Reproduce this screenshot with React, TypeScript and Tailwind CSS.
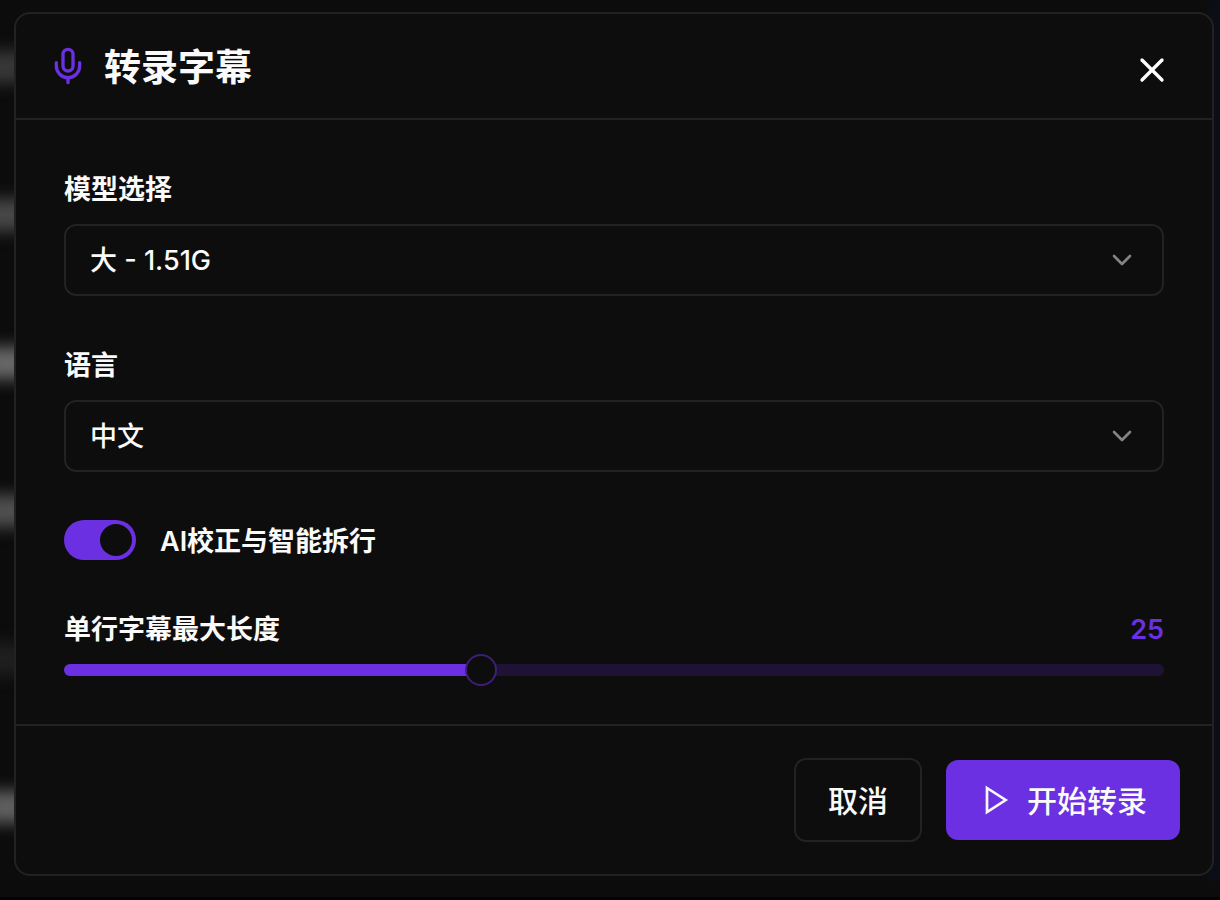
import { useState, type ReactNode } from "react";
import { ChevronDown, Mic, X } from "lucide-react";

const MODELS = [
  { value: "large", label: "大 - 1.51G" },
  { value: "medium", label: "中 - 769M" },
  { value: "small", label: "小 - 244M" },
];

const LANGUAGES = [
  { value: "zh", label: "中文" },
  { value: "en", label: "English" },
  { value: "ja", label: "日本語" },
];

const MIN_LENGTH = 10;
const MAX_LENGTH = 50;

interface SelectFieldProps {
  id: string;
  label: string;
  value: string;
  options: { value: string; label: string }[];
  onChange: (value: string) => void;
}

function SelectField({ id, label, value, options, onChange }: SelectFieldProps) {
  return (
    <div className="flex flex-col gap-4">
      <label htmlFor={id} className="pt-1 text-[27px] leading-9 font-semibold">
        {label}
      </label>
      <div className="grid items-center">
        <select
          id={id}
          value={value}
          onChange={(e) => onChange(e.target.value)}
          className="col-start-1 row-start-1 h-18 w-full appearance-none rounded-xl border-2 border-[#222222] bg-[#0d0d0d] px-6 pt-0.5 text-[27px] font-medium text-[#fafafa] outline-none"
        >
          {options.map((option) => (
            <option key={option.value} value={option.value}>
              {option.label}
            </option>
          ))}
        </select>
        <ChevronDown className="pointer-events-none col-start-1 row-start-1 mr-[26px] size-8 justify-self-end text-[#848484]" />
      </div>
    </div>
  );
}

function PlayIcon() {
  return (
    <svg
      viewBox="0 0 24 24"
      className="size-8"
      fill="none"
      stroke="currentColor"
      strokeWidth="2"
      strokeLinecap="round"
      strokeLinejoin="miter"
      aria-hidden="true"
    >
      <polygon points="6 3 20 12 6 21 6 3" />
    </svg>
  );
}

function Backdrop({ children }: { children: ReactNode }) {
  return (
    <div className="relative min-h-screen overflow-hidden border-b-3 border-[#040304] bg-[#0c0c0c]">
      {/* blurred page content behind the dialog */}
      <div aria-hidden="true" className="absolute inset-0 flex justify-between">
        <div className="-ml-4 flex w-16 flex-col gap-[116px] pt-[51px]">
          <div className="h-8 bg-[#383838] blur-[8px]" />
          <div className="h-8 bg-[#484848] blur-[8px]" />
          <div className="h-8 bg-[#686868] blur-[8px]" />
          <div className="h-8 bg-[#505050] blur-[8px]" />
          <div className="h-8 bg-[#1f1f1f] blur-[8px]" />
          <div className="h-8 bg-[#606060] blur-[8px]" />
        </div>
        <div className="mb-4 w-3 bg-[#0b0e17] blur-[1px]" />
      </div>
      <div className="relative pt-3 pr-1.5 pb-5 pl-3.5">{children}</div>
    </div>
  );
}

export default function App() {
  const [model, setModel] = useState("large");
  const [language, setLanguage] = useState("zh");
  const [aiEnabled, setAiEnabled] = useState(true);
  const [maxLength, setMaxLength] = useState(25);

  const percent = ((maxLength - MIN_LENGTH) / (MAX_LENGTH - MIN_LENGTH)) * 100;

  return (
    <Backdrop>
      <div
        role="dialog"
        aria-labelledby="dialog-title"
        className="rounded-2xl border-2 border-[#222222] bg-[#0d0d0d] font-['Inter','Noto_Sans_CJK_SC',sans-serif] text-[#fafafa]"
      >
        <header className="flex h-[106px] items-center justify-between border-b-2 border-[#222222] pr-10 pl-8">
          <div className="flex items-center gap-4">
            <Mic className="size-10 text-[#6b30e2]" />
            <h2 id="dialog-title" className="pt-1 text-[37px] leading-12 font-semibold">
              转录字幕
            </h2>
          </div>
          <button type="button" aria-label="关闭" className="mt-2 text-white">
            <X className="size-10" />
          </button>
        </header>

        <div className="flex flex-col gap-12 p-12">
          <SelectField id="model" label="模型选择" value={model} options={MODELS} onChange={setModel} />
          <SelectField id="language" label="语言" value={language} options={LANGUAGES} onChange={setLanguage} />

          <div className="flex items-center gap-6">
            <button
              id="ai-switch"
              type="button"
              role="switch"
              aria-checked={aiEnabled}
              onClick={() => setAiEnabled(!aiEnabled)}
              className={`flex h-10 w-18 items-center rounded-full p-1 ${
                aiEnabled ? "justify-end bg-[#6b30e2]" : "justify-start bg-[#262626]"
              }`}
            >
              <span className="size-8 rounded-full bg-[#0d0d0d]" />
            </button>
            <label htmlFor="ai-switch" className="pt-1 text-[27px] leading-9 font-semibold">
              AI校正与智能拆行
            </label>
          </div>

          <div className="flex flex-col gap-4">
            <div className="flex items-center justify-between pt-1 text-[27px] leading-9 font-semibold">
              <label htmlFor="max-length">单行字幕最大长度</label>
              <span className="text-[#6b30e2]">{maxLength}</span>
            </div>
            <input
              id="max-length"
              type="range"
              min={MIN_LENGTH}
              max={MAX_LENGTH}
              value={maxLength}
              onChange={(e) => setMaxLength(Number(e.target.value))}
              style={{
                backgroundImage: `linear-gradient(to right, #6b30e2 ${percent}%, #1f1335 ${percent}%)`,
              }}
              className="h-3 w-full appearance-none rounded-full outline-none [&::-webkit-slider-thumb]:size-8 [&::-webkit-slider-thumb]:appearance-none [&::-webkit-slider-thumb]:rounded-full [&::-webkit-slider-thumb]:border-2 [&::-webkit-slider-thumb]:border-[#3d1f78] [&::-webkit-slider-thumb]:bg-[#0d0d0d]"
            />
          </div>
        </div>

        <footer className="flex items-center justify-end gap-6 border-t-2 border-[#222222] p-8 text-[30px] font-medium">
          <button type="button" className="h-21 rounded-xl border-2 border-[#222222] px-8 pt-0.5">
            取消
          </button>
          <button type="button" className="flex h-20 items-center gap-4 rounded-xl bg-[#6b30e2] px-[33px]">
            <PlayIcon />
            <span className="pt-0.5">开始转录</span>
          </button>
        </footer>
      </div>
    </Backdrop>
  );
}
